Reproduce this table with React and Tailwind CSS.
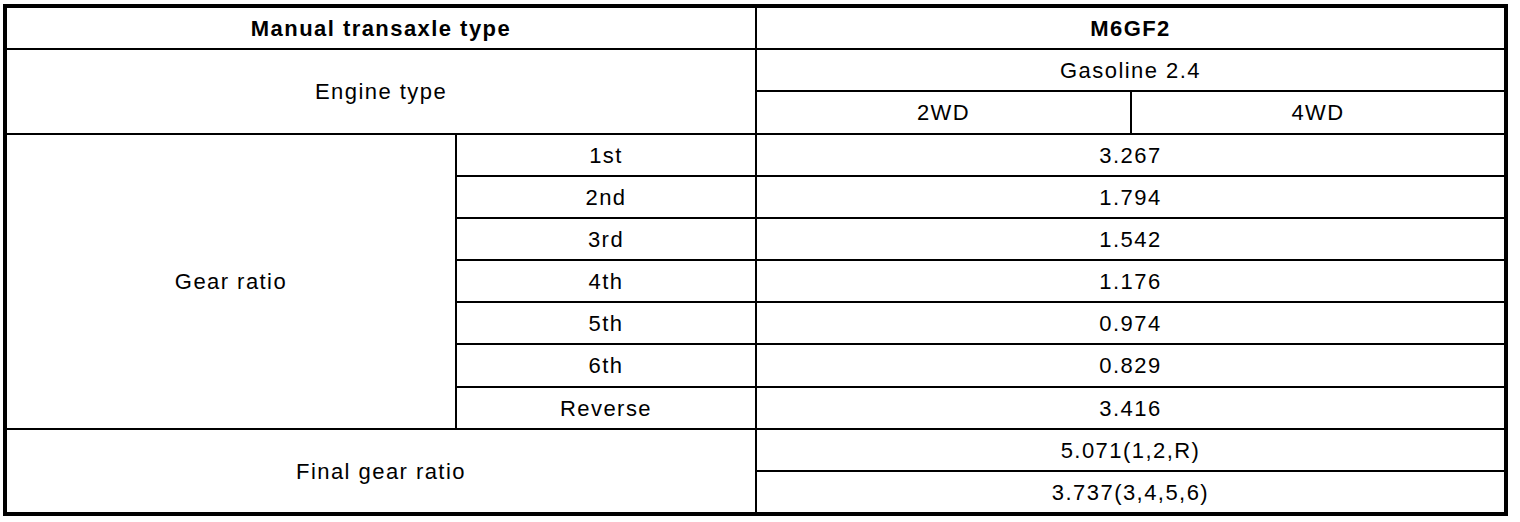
export default function App() {
  const cell = "bg-white flex items-center justify-center text-black pt-[2px]";
  const gears = [
    ["1st", "3.267"],
    ["2nd", "1.794"],
    ["3rd", "1.542"],
    ["4th", "1.176"],
    ["5th", "0.974"],
    ["6th", "0.829"],
    ["Reverse", "3.416"],
  ];
  return (
    <div className="bg-white w-[1520px] h-[522px] pt-[4px] pl-[3px]" style={{ fontFamily: '"Liberation Sans", Arial, sans-serif' }}>
      <div className="w-[1505px] h-[512px] border-4 border-black bg-black grid gap-[2px] grid-cols-[448px_298px_373px_372px] grid-rows-[repeat(12,1fr)] text-[22px] leading-none tracking-[1.45px]">
        <div className={`${cell} col-start-1 col-span-2 row-start-1 font-bold`}>Manual transaxle type</div>
        <div className={`${cell} col-start-3 col-span-2 row-start-1 font-bold`}>M6GF2</div>
        <div className={`${cell} col-start-1 col-span-2 row-start-2 row-span-2`}>Engine type</div>
        <div className={`${cell} col-start-3 col-span-2 row-start-2`}>Gasoline 2.4</div>
        <div className={`${cell} col-start-3 row-start-3`}>2WD</div>
        <div className={`${cell} col-start-4 row-start-3`}>4WD</div>
        <div className={`${cell} col-start-1 row-start-4 row-span-7`}>Gear ratio</div>
        {gears.map(([g, v], i) => (
          <div key={g} className="contents">
            <div className={`${cell} col-start-2`} style={{ gridRowStart: 4 + i }}>{g}</div>
            <div className={`${cell} col-start-3 col-span-2`} style={{ gridRowStart: 4 + i }}>{v}</div>
          </div>
        ))}
        <div className={`${cell} col-start-1 col-span-2 row-start-11 row-span-2`}>Final gear ratio</div>
        <div className={`${cell} col-start-3 col-span-2 row-start-11`}>5.071(1,2,R)</div>
        <div className={`${cell} col-start-3 col-span-2 row-start-12`}>3.737(3,4,5,6)</div>
      </div>
    </div>
  );
}
